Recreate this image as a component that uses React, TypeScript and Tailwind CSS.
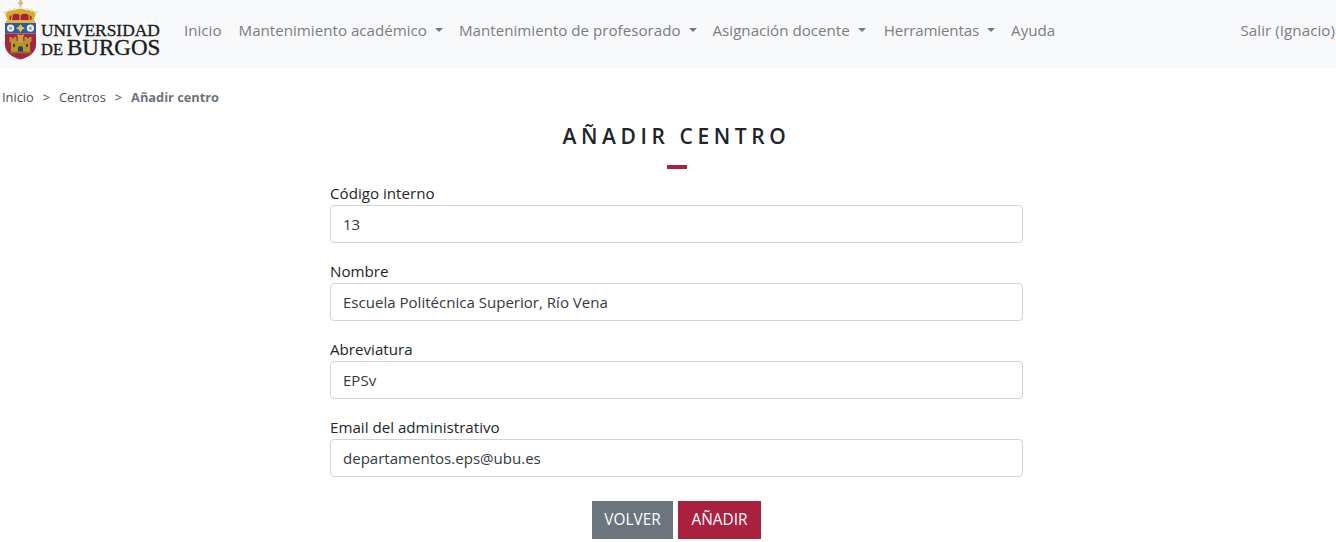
const sans = "font-['Open_Sans','Noto_Sans',sans-serif]";

function Shield() {
  return (
    <svg width="38" height="60" viewBox="0 0 38 60" className="shrink-0">
      <rect x="16.6" y="0" width="1.8" height="8" fill="#c9b06a" />
      <rect x="15" y="2.5" width="5" height="1.6" fill="#c9b06a" />
      <path d="M2 13 L5 22 H30 L33 13 C29 9 24 11 17.5 8 C11 11 6 9 2 13 Z" fill="#d9ad2b" />
      <path d="M6 17 Q11 11.5 17.5 15 Q24 11.5 29 17 L28 20 H7 Z" fill="#a5203a" />
      <path d="M17 8 V20 M10 10 L8.5 20 M25 10 L26.5 20" stroke="#d9ad2b" strokeWidth="1.2" />
      <circle cx="1.8" cy="12.5" r="1.7" fill="#e6e2d2" />
      <circle cx="6.5" cy="10" r="1.6" fill="#e6e2d2" />
      <circle cx="11.5" cy="8.8" r="1.6" fill="#e6e2d2" />
      <circle cx="17.5" cy="7.5" r="1.8" fill="#e6e2d2" />
      <circle cx="23.5" cy="8.8" r="1.6" fill="#e6e2d2" />
      <circle cx="28.5" cy="10" r="1.6" fill="#e6e2d2" />
      <circle cx="33.2" cy="12.5" r="1.7" fill="#e6e2d2" />
      <rect x="3" y="20.5" width="29" height="2.5" fill="#e0b93a" />
      <path d="M2 23 H33 V33.5 H2 Z" fill="#2a5ba6" />
      <circle cx="7.6" cy="28.2" r="3.6" fill="#eef0f2" />
      <circle cx="7.6" cy="28.2" r="1.6" fill="#9aa4b4" />
      <circle cx="27.4" cy="28.2" r="3.6" fill="#eef0f2" />
      <circle cx="27.4" cy="28.2" r="1.6" fill="#9aa4b4" />
      <path d="M17.5 24 L19.2 26.6 L22 28.2 L19.2 29.8 L17.5 32.4 L15.8 29.8 L13 28.2 L15.8 26.6 Z" fill="#e8c23c" />
      <path d="M2 33.5 H33 V45 C33 53 25 57.5 17.5 59.5 C10 57.5 2 53 2 45 Z" fill="#a82440" />
      <path d="M8 53 V42 H6.5 V37 H9 V38.5 H11 V37 H13.5 V41 H21.5 V37 H24 V38.5 H26 V37 H28.5 V42 H27 V53 Z" fill="#b8962e" />
      <rect x="14.8" y="35" width="5.4" height="7" fill="#c9a537" />
      <rect x="14" y="34.5" width="1.6" height="1.6" fill="#c9a537" />
      <rect x="19.4" y="34.5" width="1.6" height="1.6" fill="#c9a537" />
      <path d="M15 53 V47.5 Q17.5 44.5 20 47.5 V53 Z" fill="#27406f" />
      <rect x="10" y="44" width="2" height="3" fill="#4a3a14" />
      <rect x="23" y="44" width="2" height="3" fill="#4a3a14" />
      <rect x="7" y="51.5" width="21" height="1.8" fill="#8f7424" />
    </svg>
  );
}

function Logo() {
  return (
    <div className="flex items-start w-[161px] h-[68px] ml-[3px]">
      <Shield />
      <div className="font-['Liberation_Serif',serif] text-[#1c1c1c] pt-[22px] whitespace-nowrap [-webkit-text-stroke:0.35px_#1c1c1c]">
        <div className="text-[17.4px] leading-[16px]">UNIVERSIDAD</div>
        <div className="leading-[18px] flex items-baseline mt-[1px]">
          <span className="text-[16.5px]">DE</span>
          <span className="text-[23px] ml-[4px]">BURGOS</span>
        </div>
      </div>
    </div>
  );
}

function NavLink({ label, caret, className = "" }: { label: string; caret?: boolean; className?: string }) {
  return (
    <a className={`flex items-center whitespace-nowrap text-[#7c7c80] px-2 ${className}`}>
      {label}
      {caret && (
        <span className="ml-[8px] w-0 h-0 border-x-[4.5px] border-x-transparent border-t-[4.5px] border-t-[#77777a]" />
      )}
    </a>
  );
}

function Field({ label, value }: { label: string; value: string }) {
  return (
    <div className="flex flex-col">
      <label className="h-[22px] text-[15.15px] leading-[20px] text-[#212529]">{label}</label>
      <input
        readOnly
        value={value}
        className="h-[38px] w-full border border-[#ced4da] rounded-[4px] bg-white px-[12px] text-[15.05px] text-[#343a40] outline-none"
      />
    </div>
  );
}

export default function App() {
  return (
    <div className={`${sans} bg-white h-[542px] w-[1336px] overflow-hidden`}>
      <nav className="h-[68px] bg-[#f8f9fa] flex items-center text-[15.15px]">
        <Logo />
        <div className="flex items-center ml-[12px] pb-2">
          <NavLink label="Inicio" />
          <NavLink label="Mantenimiento académico" caret className="ml-[1px]" />
          <NavLink label="Mantenimiento de profesorado" caret />
          <NavLink label="Asignación docente" caret />
          <NavLink label="Herramientas" caret className="ml-[2px] tracking-[-0.15px]" />
          <NavLink label="Ayuda" />
        </div>
        <a className="ml-auto text-[#7c7c80] whitespace-nowrap pr-px pb-2 tracking-[0.05px]">Salir (Ignacio)</a>
      </nav>

      <div className="flex items-center gap-[9px] pl-[2px] mt-[20px] text-[12.8px] leading-[18px] text-[#495057]">
        <span>Inicio</span>
        <span>&gt;</span>
        <span>Centros</span>
        <span>&gt;</span>
        <span className="font-bold text-[#6c757d]">Añadir centro</span>
      </div>

      <div className="ml-[330px] w-[693px]">
        <h1 className="mt-[15px] text-center text-[21px] leading-[30px] font-semibold tracking-[4.6px] text-[#212529]">AÑADIR CENTRO</h1>
        <div className="mx-auto mt-[14px] h-[4px] w-[20px] bg-[#aa213f]" />
        <div className="mt-[14px] flex flex-col gap-[18px]">
          <Field label="Código interno" value="13" />
          <Field label="Nombre" value="Escuela Politécnica Superior, Río Vena" />
          <Field label="Abreviatura" value="EPSv" />
          <Field label="Email del administrativo" value="departamentos.eps@ubu.es" />
        </div>
        <div className="mt-[24px] flex justify-center gap-[5px] text-[15.4px] text-white">
          <button className="h-[38px] w-[81px] bg-[#6c757d]">VOLVER</button>
          <button className="h-[38px] w-[83px] bg-[#aa213f]">AÑADIR</button>
        </div>
      </div>
    </div>
  );
}
